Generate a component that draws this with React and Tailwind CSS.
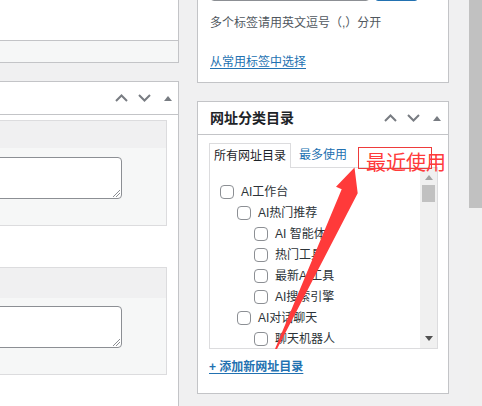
import React from 'react'

const tree = [
  { label: 'AI工作台', level: 0 },
  { label: 'AI热门推荐', level: 1 },
  { label: 'AI 智能体', level: 2 },
  { label: '热门工具', level: 2 },
  { label: '最新AI工具', level: 2 },
  { label: 'AI搜索引擎', level: 2 },
  { label: 'AI对话聊天', level: 1 },
  { label: '聊天机器人', level: 2 },
]

const indent = ['pl-0', 'pl-[17px]', 'pl-[34px]']

function BoxControls() {
  return (
    <div className="flex items-center">
      <svg width="13" height="8" viewBox="0 0 13 8" className="block">
        <polyline points="1,7 6.5,1.5 12,7" fill="none" stroke="#787c82" strokeWidth="2" />
      </svg>
      <svg width="13" height="8" viewBox="0 0 13 8" className="block ml-[10px]">
        <polyline points="1,1 6.5,6.5 12,1" fill="none" stroke="#787c82" strokeWidth="2" />
      </svg>
      <svg width="8" height="5" viewBox="0 0 8 5" className="block ml-[13px]">
        <polygon points="0,5 4,0 8,5" fill="#787c82" />
      </svg>
    </div>
  )
}

function Textarea() {
  return (
    <div className="relative w-[199px] h-[42px] ml-[10px] bg-white border border-[#8c8f94] rounded-[4px]">
      <svg width="8" height="8" viewBox="0 0 8 8" className="absolute right-[1px] bottom-[1px]">
        <line x1="1" y1="8" x2="8" y2="1" stroke="#8c8f94" strokeWidth="1" />
        <line x1="4" y1="8" x2="8" y2="4" stroke="#8c8f94" strokeWidth="1" />
      </svg>
    </div>
  )
}

function Checkbox() {
  return <span className="inline-block shrink-0 w-[14px] h-[14px] rounded-[4px] border border-[#8c8f94] bg-white" />
}

export default function App() {
  return (
    <div className="relative w-[482px] h-[406px] overflow-hidden bg-[#f0f0f1] flex font-['Liberation_Sans','Noto_Sans_CJK_SC',sans-serif] text-[12px] text-[#2c3338]">
      {/* left column */}
      <div className="w-[279px] -ml-[100px] shrink-0">
        <div className="bg-white border-r border-b border-[#c3c4c7]">
          <div className="h-[41px] border-b border-[#c3c4c7]" />
          <div className="h-[21px] bg-[#f6f7f7]" />
        </div>

        <div className="mt-[18px] bg-white border-t border-r border-[#c3c4c7] h-[400px]">
          <div className="h-[33px] border-b border-[#c3c4c7] flex items-center justify-end pr-[6px]">
            <BoxControls />
          </div>
          <div className="pt-[5px] pl-[12px] pr-[11px]">
            <div className="border border-[#dcdcde]">
              <div className="h-[27px] bg-[#f0f0f1]" />
              <div className="bg-[#f6f7f7] pt-[9px] pb-[26px]">
                <Textarea />
              </div>
            </div>
            <div className="mt-[41px] border border-[#dcdcde]">
              <div className="h-[30px] bg-[#f0f0f1]" />
              <div className="bg-[#f6f7f7] pt-[8px] pb-[26px]">
                <Textarea />
              </div>
            </div>
          </div>
        </div>
      </div>

      {/* right column */}
      <div className="w-[252px] ml-[18px] shrink-0">
        <div className="bg-white border-l border-r border-b border-[#c3c4c7] px-3 pb-[10px]">
          <div className="flex -mt-[29px] h-[30px]">
            <div className="w-[160px] h-[30px] border border-[#8c8f94] rounded-[4px] bg-white" />
            <div className="w-[43px] h-[30px] ml-[5px] border border-[#2271b1] rounded-[3px] bg-[#f6f7f7]" />
          </div>
          <p className="mt-[12px] leading-[20px] text-[#50575e]">多个标签请用英文逗号（,）分开</p>
          <p className="mt-[19px] leading-[20px]">
            <a className="text-[#2271b1] underline underline-offset-2">从常用标签中选择</a>
          </p>
        </div>

        <div className="mt-[18px] bg-white border border-[#c3c4c7]">
          <div className="h-[33px] border-b border-[#c3c4c7] flex items-center justify-between pl-3 pr-[7px]">
            <h2 className="text-[14px] font-bold text-[#1d2327] leading-[20px]">网址分类目录</h2>
            <BoxControls />
          </div>
          <div className="pt-[8px] pl-[11px] pr-[10px] pb-[18px]">
            <div className="flex items-end h-[24px]">
              <div className="relative z-10 -mb-px h-[25px] px-[4px] flex items-center bg-white border-t border-l border-r border-[#dcdcde] text-[#1d2327]">
                所有网址目录
              </div>
              <div className="ml-[4px] px-[4px] h-[24px] flex items-center text-[#2271b1]">最多使用</div>
            </div>
            <div className="h-[182px] border border-[#dcdcde] bg-white flex overflow-hidden">
              <ul className="flex-1 pt-[13px] pl-[10px]">
                {tree.map((item) => (
                  <li key={item.label} className={`flex items-center h-[21px] ${indent[item.level]}`}>
                    <Checkbox />
                    <span className="ml-[7px] leading-[16px] whitespace-nowrap">{item.label}</span>
                  </li>
                ))}
              </ul>
              <div className="w-[17px] shrink-0 bg-[#f0f0f0] flex flex-col items-center">
                <svg width="8" height="5" viewBox="0 0 8 5" className="mt-[7px]">
                  <polygon points="0,5 4,0 8,5" fill="#a3a3a3" />
                </svg>
                <div className="mt-[5px] w-[13px] h-[17px] bg-[#c1c1c1]" />
                <div className="flex-1" />
                <svg width="8" height="5" viewBox="0 0 8 5" className="mb-[7px]">
                  <polygon points="0,0 8,0 4,5" fill="#505050" />
                </svg>
              </div>
            </div>
            <p className="mt-[10px] leading-[16px]">
              <a className="font-bold text-[#2271b1] underline underline-offset-2">+ 添加新网址目录</a>
            </p>
          </div>
        </div>
      </div>

      {/* page scrollbar */}
      <div className="ml-auto w-[13px] shrink-0 bg-[#f0f0f0]">
        <div className="h-[208px] bg-[#c1c1c1]" />
      </div>

      {/* red annotation */}
      <div className="absolute left-[358px] top-[147px] w-[74px] h-[22px] border border-[#ee3b3b]" />
      <span className="absolute left-[366px] top-[153px] text-[20px] leading-[20px] text-[#ff3b3b] whitespace-nowrap">最近使用</span>
      <svg className="absolute inset-0 pointer-events-none" width="482" height="406" viewBox="0 0 482 406">
        <polygon points="354.5,167.5 336,186.7 341.7,189.3 275,349 277,349 357.7,193.3" fill="#ff3a3a" />
      </svg>
    </div>
  )
}
